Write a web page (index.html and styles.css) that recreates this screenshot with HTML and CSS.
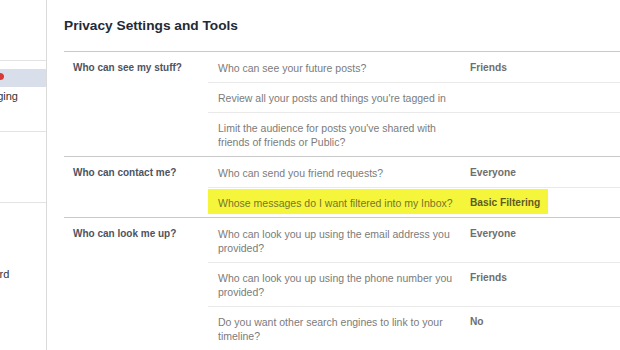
FILE: index.html
```html
<!DOCTYPE html>
<html lang="en">
<head>
    <meta charset="UTF-8">
    <title>Privacy Settings and Tools</title>
    <link rel="stylesheet" href="styles.css">
</head>
<body>

    <div class="page">
        <nav class="side">
            <div class="side-inner">
                <ul class="group first">
                    <li>General</li>
                    <li>Security</li>
                </ul>
                <ul class="group">
                    <li class="active">Privacy</li>
                    <li>Timeline and Tagging</li>
                    <li>Blocking</li>
                </ul>
                <ul class="group">
                    <li>Notifications</li>
                    <li>Mobile</li>
                    <li>Followers</li>
                </ul>
                <ul class="group">
                    <li>Apps</li>
                    <li>Ads</li>
                    <li>Payments</li>
                    <li>Support Dashboard</li>
                </ul>
            </div>
            <span class="dot"></span>
        </nav>

        <main class="content">
            <h2 class="title">Privacy Settings and Tools</h2>

            <div class="settings">
                <section class="section">
                    <div class="label">Who can see my stuff?</div>
                    <div class="rows">
                        <div class="row"><span class="q">Who can see your future posts?</span><span class="v">Friends</span></div>
                        <div class="row"><span class="q">Review all your posts and things you're tagged in</span><span class="v"></span></div>
                        <div class="row"><span class="q">Limit the audience for posts you've shared with friends of friends or Public?</span><span class="v"></span></div>
                    </div>
                </section>

                <section class="section">
                    <div class="label">Who can contact me?</div>
                    <div class="rows">
                        <div class="row"><span class="q">Who can send you friend requests?</span><span class="v">Everyone</span></div>
                        <div class="row hl"><span class="q">Whose messages do I want filtered into my Inbox?</span><span class="v">Basic Filtering</span></div>
                    </div>
                </section>

                <section class="section">
                    <div class="label">Who can look me up?</div>
                    <div class="rows">
                        <div class="row"><span class="q">Who can look you up using the email address you provided?</span><span class="v">Everyone</span></div>
                        <div class="row"><span class="q">Who can look you up using the phone number you provided?</span><span class="v">Friends</span></div>
                        <div class="row"><span class="q">Do you want other search engines to link to your timeline?</span><span class="v">No</span></div>
                    </div>
                </section>
            </div>
        </main>
    </div>

</body>
</html>
```

FILE: styles.css
```css
* {
    margin: 0;
    padding: 0;
    box-sizing: border-box;
}

body {
    font-family: "Liberation Sans", Arial, sans-serif;
    font-size: 11px;
    background-color: #fff;
    color: #333;
    overflow: hidden;
}

.page {
    display: flex;
    height: 350px;
}

/* left menu, mostly cut off */
.side {
    position: relative;
    width: 47px;
    flex-shrink: 0;
    border-right: 1px solid #dadada;
    overflow: hidden;
}

.side-inner {
    width: 200px;
    margin-left: -153px;
}

.group {
    list-style: none;
    padding: 8px 0;
    border-top: 1px solid #e3e3e3;
}

.group.first {
    border-top: none;
    padding-top: 16px;
    height: 60px;
}

.group li {
    height: 18px;
    line-height: 18px;
    padding-left: 67px;
    color: #333;
    white-space: nowrap;
}

.group li.active {
    background-color: #d8dfea;
}

.dot {
    position: absolute;
    left: -4px;
    top: 73px;
    width: 8px;
    height: 7px;
    border-radius: 50%;
    background-color: #d83a3a;
}

/* main column */
.content {
    width: 600px;
    flex-shrink: 0;
    padding-left: 17px;
}

.title {
    font-size: 13.7px;
    font-weight: bold;
    color: #232937;
    height: 51px;
    line-height: 51px;
}

.section {
    display: grid;
    grid-template-columns: 144px 1fr;
    border-top: 1px solid #c9c9c9;
}

.section:last-child {
    border-bottom: 1px solid #c9c9c9;
}

.label {
    padding: 9px 0 0 9px;
    line-height: 14px;
    font-size: 10px;
    font-weight: bold;
    color: #4e5360;
}

.row {
    display: grid;
    grid-template-columns: 262px 1fr;
    line-height: 14px;
}

.row + .row {
    border-top: 1px solid #e9e9e9;
}

.q {
    padding: 8px 8px 7px 10px;
    font-size: 10.5px;
    color: #7b7b7b;
}

.v {
    padding: 8px 0 7px;
    font-size: 10.2px;
    font-weight: bold;
    color: #6e6e6e;
}

.row:first-child .q,
.row:first-child .v {
    padding-top: 9px;
}

.row.hl {
    background: linear-gradient(#f5f53c, #f5f53c) no-repeat 0 1px;
    background-size: 340px 25px;
}

.row.hl .q {
    color: #76762a;
}

.row.hl .v {
    color: #5e5c1c;
}
```
